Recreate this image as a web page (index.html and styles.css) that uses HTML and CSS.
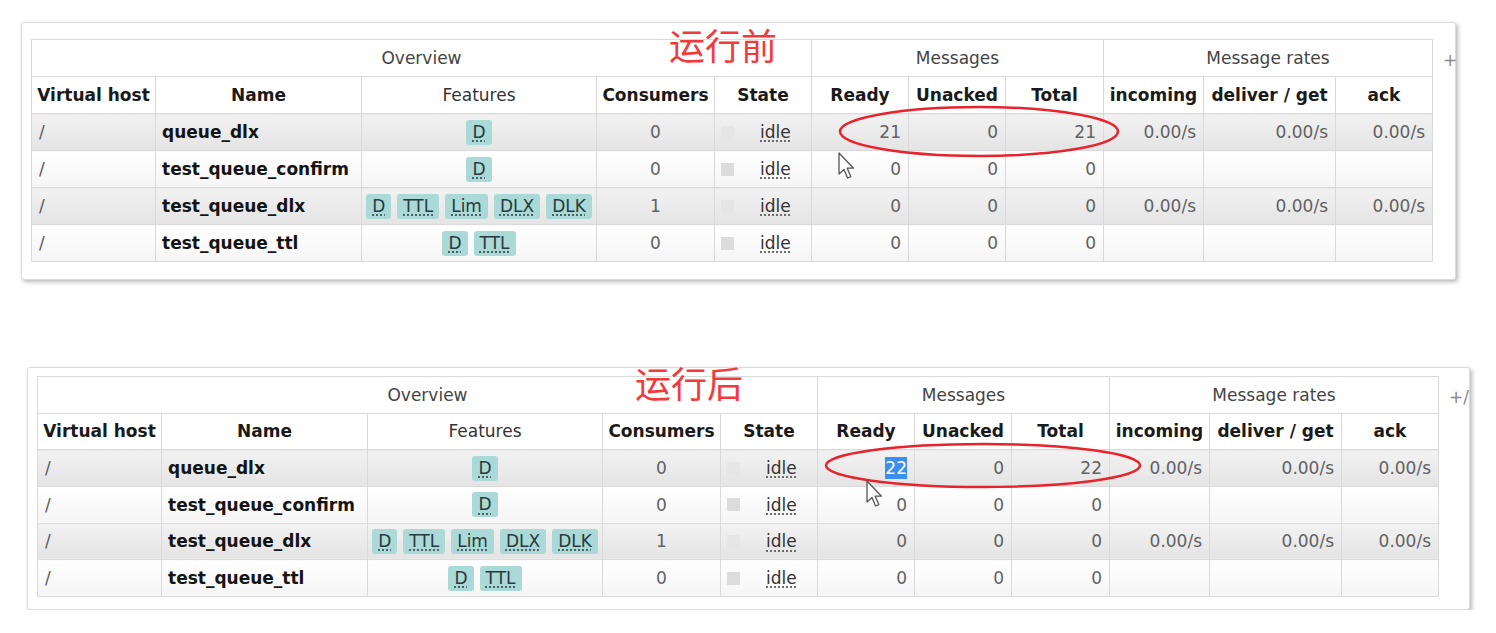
FILE: index.html
```html
<!DOCTYPE html>
<html lang="zh">
<head>
<meta charset="utf-8">
<title>Queues</title>
<link rel="stylesheet" href="styles.css">
</head>
<body>
<div class="page">

  <section class="card card-before">
    <table class="list">
      <colgroup>
        <col class="c-vhost"><col class="c-name"><col class="c-feat"><col class="c-cons"><col class="c-state">
        <col class="c-ready"><col class="c-unack"><col class="c-total">
        <col class="c-in"><col class="c-del"><col class="c-ack">
      </colgroup>
      <thead>
        <tr class="group">
          <th colspan="5">Overview</th>
          <th colspan="3">Messages</th>
          <th colspan="3">Message rates</th>
        </tr>
        <tr class="cols">
          <th>Virtual host</th><th>Name</th><th class="plain">Features</th><th>Consumers</th><th>State</th>
          <th>Ready</th><th>Unacked</th><th>Total</th>
          <th>incoming</th><th>deliver / get</th><th>ack</th>
        </tr>
      </thead>
      <tbody>
        <tr class="alt1">
          <td class="vhost">/</td><td class="name">queue_dlx</td>
          <td><div class="feats"><abbr class="feat">D</abbr></div></td>
          <td class="c">0</td>
          <td><div class="state"><span class="sq"></span><abbr class="status">idle</abbr></div></td>
          <td class="r">21</td><td class="r">0</td><td class="r">21</td>
          <td class="r">0.00/s</td><td class="r">0.00/s</td><td class="r">0.00/s</td>
        </tr>
        <tr class="alt2">
          <td class="vhost">/</td><td class="name">test_queue_confirm</td>
          <td><div class="feats"><abbr class="feat">D</abbr></div></td>
          <td class="c">0</td>
          <td><div class="state"><span class="sq"></span><abbr class="status">idle</abbr></div></td>
          <td class="r">0</td><td class="r">0</td><td class="r">0</td>
          <td></td><td></td><td></td>
        </tr>
        <tr class="alt1">
          <td class="vhost">/</td><td class="name">test_queue_dlx</td>
          <td><div class="feats"><abbr class="feat">D</abbr><abbr class="feat">TTL</abbr><abbr class="feat">Lim</abbr><abbr class="feat">DLX</abbr><abbr class="feat">DLK</abbr></div></td>
          <td class="c">1</td>
          <td><div class="state"><span class="sq"></span><abbr class="status">idle</abbr></div></td>
          <td class="r">0</td><td class="r">0</td><td class="r">0</td>
          <td class="r">0.00/s</td><td class="r">0.00/s</td><td class="r">0.00/s</td>
        </tr>
        <tr class="alt2">
          <td class="vhost">/</td><td class="name">test_queue_ttl</td>
          <td><div class="feats"><abbr class="feat">D</abbr><abbr class="feat">TTL</abbr></div></td>
          <td class="c">0</td>
          <td><div class="state"><span class="sq"></span><abbr class="status">idle</abbr></div></td>
          <td class="r">0</td><td class="r">0</td><td class="r">0</td>
          <td></td><td></td><td></td>
        </tr>
      </tbody>
    </table>
    <span class="colsel">+</span>
    <div class="tag tag-before">运行前</div>
    <svg class="ring ring-before" width="282" height="53" viewBox="0 0 282 53"><ellipse cx="141" cy="26.5" rx="139" ry="24.5"/></svg>
    <svg class="cursor cursor-before" width="18" height="28" viewBox="0 0 18 28"><path d="M1 1 L1 22 L6 17.5 L9.6 26 L12.8 24.6 L9.2 16.2 L15.5 16.2 Z"/></svg>
  </section>

  <section class="card card-after">
    <table class="list">
      <colgroup>
        <col class="c-vhost"><col class="c-name"><col class="c-feat"><col class="c-cons"><col class="c-state">
        <col class="c-ready"><col class="c-unack"><col class="c-total">
        <col class="c-in"><col class="c-del"><col class="c-ack">
      </colgroup>
      <thead>
        <tr class="group">
          <th colspan="5">Overview</th>
          <th colspan="3">Messages</th>
          <th colspan="3">Message rates</th>
        </tr>
        <tr class="cols">
          <th>Virtual host</th><th>Name</th><th class="plain">Features</th><th>Consumers</th><th>State</th>
          <th>Ready</th><th>Unacked</th><th>Total</th>
          <th>incoming</th><th>deliver / get</th><th>ack</th>
        </tr>
      </thead>
      <tbody>
        <tr class="alt1">
          <td class="vhost">/</td><td class="name">queue_dlx</td>
          <td><div class="feats"><abbr class="feat">D</abbr></div></td>
          <td class="c">0</td>
          <td><div class="state"><span class="sq"></span><abbr class="status">idle</abbr></div></td>
          <td class="r"><span class="sel">22</span></td><td class="r">0</td><td class="r">22</td>
          <td class="r">0.00/s</td><td class="r">0.00/s</td><td class="r">0.00/s</td>
        </tr>
        <tr class="alt2">
          <td class="vhost">/</td><td class="name">test_queue_confirm</td>
          <td><div class="feats"><abbr class="feat">D</abbr></div></td>
          <td class="c">0</td>
          <td><div class="state"><span class="sq"></span><abbr class="status">idle</abbr></div></td>
          <td class="r">0</td><td class="r">0</td><td class="r">0</td>
          <td></td><td></td><td></td>
        </tr>
        <tr class="alt1">
          <td class="vhost">/</td><td class="name">test_queue_dlx</td>
          <td><div class="feats"><abbr class="feat">D</abbr><abbr class="feat">TTL</abbr><abbr class="feat">Lim</abbr><abbr class="feat">DLX</abbr><abbr class="feat">DLK</abbr></div></td>
          <td class="c">1</td>
          <td><div class="state"><span class="sq"></span><abbr class="status">idle</abbr></div></td>
          <td class="r">0</td><td class="r">0</td><td class="r">0</td>
          <td class="r">0.00/s</td><td class="r">0.00/s</td><td class="r">0.00/s</td>
        </tr>
        <tr class="alt2">
          <td class="vhost">/</td><td class="name">test_queue_ttl</td>
          <td><div class="feats"><abbr class="feat">D</abbr><abbr class="feat">TTL</abbr></div></td>
          <td class="c">0</td>
          <td><div class="state"><span class="sq"></span><abbr class="status">idle</abbr></div></td>
          <td class="r">0</td><td class="r">0</td><td class="r">0</td>
          <td></td><td></td><td></td>
        </tr>
      </tbody>
    </table>
    <span class="colsel">+/</span>
    <div class="tag tag-after">运行后</div>
    <svg class="ring ring-after" width="318" height="47" viewBox="0 0 318 47"><ellipse cx="159" cy="23.5" rx="157" ry="21.5"/></svg>
    <svg class="cursor cursor-after" width="18" height="28" viewBox="0 0 18 28"><path d="M1 1 L1 22 L6 17.5 L9.6 26 L12.8 24.6 L9.2 16.2 L15.5 16.2 Z"/></svg>
  </section>

</div>
</body>
</html>
```

FILE: styles.css
```css
* { box-sizing: border-box; }

body {
  margin: 0;
  background: #fff;
  font-family: "DejaVu Sans", Verdana, sans-serif;
  color: #333;
}

.page {
  display: flex;
  flex-direction: column;
  align-items: flex-start;
  padding-top: 22px;
}

.card {
  position: relative;
  display: flex;
  align-items: flex-start;
  background: #fff;
  border: 1px solid #dcdcdc;
  border-radius: 3px;
  box-shadow: 2px 2px 4px rgba(0, 0, 0, 0.28);
}

.card-before {
  margin-left: 21px;
  width: 1435px;
  height: 258px;
  padding: 16px 0 0 9px;
}

.card-after {
  margin-left: 27px;
  margin-top: 87px;
  width: 1443px;
  height: 243px;
  padding: 8px 0 0 9px;
}

/* table */
.list {
  flex-shrink: 0;
  border-collapse: collapse;
  table-layout: fixed;
  width: 1401px;
  font-size: 17px;
}

.c-vhost { width: 124px; }
.c-name  { width: 206px; }
.c-feat  { width: 235px; }
.c-cons  { width: 118px; }
.c-state { width: 97px; }
.c-ready { width: 97px; }
.c-unack { width: 97px; }
.c-total { width: 98px; }
.c-in    { width: 100px; }
.c-del   { width: 132px; }
.c-ack   { width: 97px; }

.list th,
.list td {
  border: 1px solid #dadada;
  padding: 0 6px;
  white-space: nowrap;
  overflow: hidden;
  vertical-align: middle;
}

.card-before .list tr { height: 37px; }
.card-after .list tr { height: 36.66px; }

.list .group th {
  font-weight: normal;
  color: #444;
  text-align: center;
  background: #fff;
}

.list .cols th {
  font-weight: bold;
  color: #1a1a1a;
  text-align: center;
  background: #fff;
  padding: 0 2px;
}

.list .cols th.plain {
  font-weight: normal;
  color: #333;
}

.alt1 td { background: linear-gradient(#f2f2f2, #e4e4e4); }
.alt2 td { background: linear-gradient(#ffffff, #f5f5f5); }

.list td { color: #626262; }
.list td.vhost { color: #5a5a5a; padding-left: 7px; }
.list td.name { color: #141414; font-weight: bold; }
.list td.c { text-align: center; }
.list td.r { text-align: right; padding-right: 7px; }

/* features */
.feats {
  display: flex;
  justify-content: center;
  gap: 6px;
}

.feat {
  display: block;
  height: 25px;
  line-height: 25px;
  padding: 0 6px;
  border-radius: 3px;
  background: #aad9d7;
  color: #283a3e;
  text-decoration: underline dotted #3c4c50;
  text-underline-offset: 3px;
}

/* state */
.state {
  display: flex;
  align-items: center;
  gap: 26px;
}

.sq {
  width: 13px;
  height: 13px;
  flex-shrink: 0;
  background: #dcdcdc;
}

.alt1 .sq { background: #e6e6e6; }

.status {
  color: #333;
  text-decoration: underline dotted #555;
  text-underline-offset: 3px;
}

.sel {
  background: #3a8ff0;
  color: #fff;
  padding: 1px 0;
}

/* column chooser (only the visible part of "+/-") */
.colsel {
  white-space: nowrap;
  color: #8a8a8a;
  font-size: 17px;
  line-height: 20px;
  margin-top: 11px;
  padding-left: 10px;
}

/* annotations drawn over the screenshot */
.tag {
  position: absolute;
  font-family: "Noto Sans CJK SC", sans-serif;
  font-size: 36px;
  line-height: 36px;
  color: #f23a3a;
  white-space: nowrap;
}

.tag-before { left: 647px; top: 3px; }
.tag-after { left: 607px; top: -4px; }

.ring {
  position: absolute;
  overflow: visible;
}

.ring ellipse {
  fill: none;
  stroke: #e8232b;
  stroke-width: 2.5;
}

.ring-before { left: 816px; top: 82px; }
.ring-after { left: 796px; top: 74px; }

.cursor {
  position: absolute;
  overflow: visible;
}

.cursor path {
  fill: #fff;
  stroke: #555;
  stroke-width: 1.3;
  stroke-linejoin: round;
}

.cursor-before { left: 816px; top: 129px; }
.cursor-after { left: 838px; top: 112px; }
```
